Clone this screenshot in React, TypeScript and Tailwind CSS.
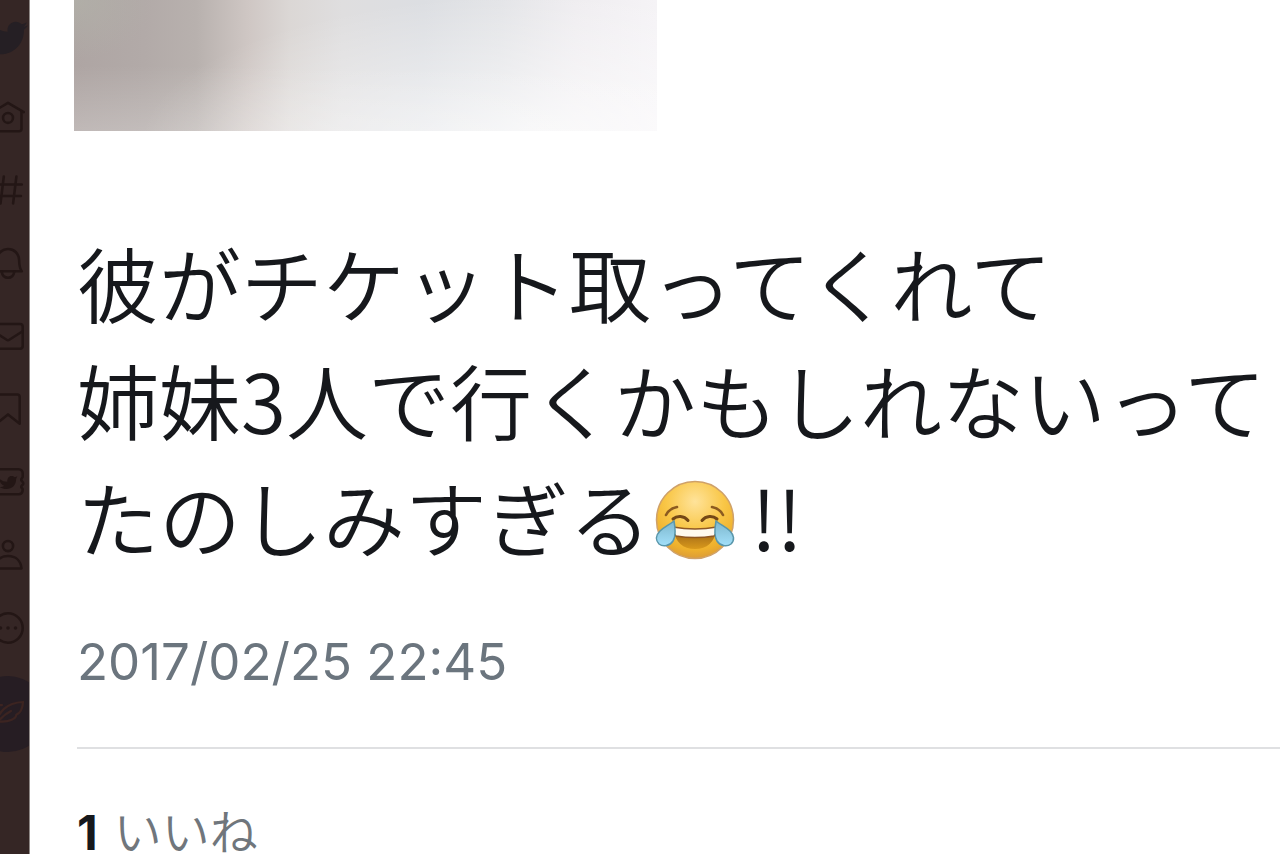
import type { ReactNode } from 'react';
import { FaTwitter } from 'react-icons/fa';

interface NavItem {
  label: string;
  icon: ReactNode;
}

// Side navigation icons, all on a 24x24 grid
const navItems: NavItem[] = [
  {
    label: 'ホーム',
    icon: (
      <>
        <path d="M1.5 8.8 12 2.6l10.5 6.2" />
        <path d="M3 8.2v11.6c0 1 .7 1.7 1.7 1.7h14.6c1 0 1.7-.7 1.7-1.7V8.2" />
        <circle cx="12" cy="12.6" r="3.3" />
      </>
    ),
  },
  {
    label: '話題を検索',
    icon: <path d="M9.2 3 7 21M17.6 3l-2.2 18M3.2 8.3h18M2.6 16h18" />,
  },
  {
    label: '通知',
    icon: (
      <>
        <path d="M2.8 17.5c1.5-1.8 1.7-3.4 1.8-7.5C4.8 5.5 8 2.7 12 2.7s7.2 2.8 7.4 7.3c.1 4.1.3 5.7 1.8 7.5z" />
        <path d="M7.8 17.8c.4 2.5 2 4 4.2 4s3.8-1.5 4.2-4" />
      </>
    ),
  },
  {
    label: 'メッセージ',
    icon: (
      <>
        <rect x="2.2" y="4" width="19.6" height="16.5" rx="1.8" />
        <path d="m2.5 9 8.6 5.5c.6.4 1.2.4 1.8 0L21.5 9" />
      </>
    ),
  },
  {
    label: 'ブックマーク',
    icon: <path d="M4.2 21.8V4c0-1 .7-1.7 1.7-1.7h12.2c1 0 1.7.7 1.7 1.7v17.8L12 15.6z" />,
  },
  {
    label: 'Twitter Blue',
    icon: (
      <>
        <path d="M5 3.5h14c1.7 0 2.8 1.2 2.8 2.8v2.2c0 .8-1 1-1 2s1.400 1.300 1.400 2.500-1.400 1.200-1.400 2.200 1 1 1 1.800c0 2-1.100 3.200-2.800 3.200H5c-1.700 0-2.800-1.200-2.800-2.800V6.300C2.200 4.700 3.300 3.500 5 3.500z" />
        <path
          d="M6 9.500c1.500 1.600 3.300 2.300 5.500 2.300 0-2.300 1-3.800 2.800-3.800 1 0 1.600.3 2.200.9l1.700-.7-.8 1.800c.1 4.200-2.700 6.700-6.400 6.700-1.800 0-3.200-.4-4.500-1.300 1.300 0 2.200-.3 3-.9-1.800-.5-3.100-2.400-3.500-5z"
          fill="currentColor"
          stroke="none"
        />
      </>
    ),
  },
  {
    label: 'プロフィール',
    icon: (
      <>
        <circle cx="12" cy="6" r="3.4" />
        <path d="M3 21c.5-5 3.8-8.3 9-8.3s8.5 3.3 9 8.3z" />
      </>
    ),
  },
  {
    label: 'もっと見る',
    icon: (
      <>
        <circle cx="12" cy="12" r="9.8" />
        <path d="M7 12h.01M12 12h.01M17 12h.01" strokeWidth="2.4" />
      </>
    ),
  },
];

const Sidebar = () => {
  return (
    <header className="w-[30px] shrink-0 overflow-hidden border-r border-[#8f8886] bg-[#352625] text-[#231615]">
      <div className="-ml-[30px] flex w-[76px] flex-col items-center">
        <a href="#home" aria-label="Twitter" className="flex h-[76px] items-center text-[#251f24]">
          <FaTwitter size={40} />
        </a>
        <nav className="mt-1 flex flex-col">
          {navItems.map((item) => (
            <a
              key={item.label}
              href="#nav"
              aria-label={item.label}
              className="flex h-[73px] items-center"
            >
              <svg
                viewBox="0 0 24 24"
                className="size-9"
                fill="none"
                stroke="currentColor"
                strokeWidth="1.7"
                strokeLinecap="round"
                strokeLinejoin="round"
              >
                {item.icon}
              </svg>
            </a>
          ))}
        </nav>
        <button
          aria-label="ツイートする"
          className="mt-3 flex size-[76px] items-center justify-center rounded-full bg-[#261d23] text-[#3c2421]"
        >
          <svg
            viewBox="0 0 24 24"
            className="size-9"
            fill="none"
            stroke="currentColor"
            strokeWidth="1.5"
            strokeLinecap="round"
            strokeLinejoin="round"
          >
            <path d="M3 21C5.5 10 11 4.5 22 4c-.3 5-2 7.5-4.5 8.5 0 2.5-4.5 5-11 4.5" />
            <path d="M3 21c2.5-5 6-8.5 11-11M2 6h6M5 3v6" />
          </svg>
        </button>
      </div>
    </header>
  );
};

const JoyEmoji = () => {
  return (
    <svg viewBox="0 0 80 80" className="size-20" role="img" aria-label="😂">
      <defs>
        <radialGradient id="face" cx="50%" cy="26%" r="74%">
          <stop offset="0%" stopColor="#ffe39a" />
          <stop offset="50%" stopColor="#f9c748" />
          <stop offset="85%" stopColor="#eeb02c" />
          <stop offset="100%" stopColor="#dc9c38" />
        </radialGradient>
        <linearGradient id="mouth" x1="0" y1="0" x2="0" y2="1">
          <stop offset="0%" stopColor="#9a6318" />
          <stop offset="100%" stopColor="#d9991b" />
        </linearGradient>
        <linearGradient id="tear" x1="0" y1="0" x2="0" y2="1">
          <stop offset="0%" stopColor="#7db6cc" />
          <stop offset="100%" stopColor="#a2e0fa" />
        </linearGradient>
      </defs>
      <circle cx="40" cy="40" r="38.5" fill="url(#face)" stroke="#cfa169" strokeWidth="1.5" />
      <path d="M19 50c1 12 9 19 21 19s20-7 21-19c-13 3-29 3-42 0z" fill="url(#mouth)" />
      <path
        d="M18 47c13 2.5 31 2.5 44 0 0 4-1 7-3 9-12 2-26 2-38 0-2-2-3-5-3-9z"
        fill="#fffaf0"
        stroke="#8e5724"
        strokeWidth="1.5"
      />
      <path
        d="M18 39c4-3.5 11-3.5 15 1.5M47 40.5c4-5 11-5 15-1.5"
        fill="none"
        stroke="#744816"
        strokeWidth="3"
        strokeLinecap="round"
      />
      <path
        d="M11 35c2-4 6-7 11-8M57 27c5 1 9 4 11 8"
        fill="none"
        stroke="#8c5b20"
        strokeWidth="2.6"
        strokeLinecap="round"
      />
      <path
        d="M19 41c1.5 8 2 15-1 20-3 5-10 6-14 3-4-4-3-9 1-13 4-4 9-6 14-10z"
        fill="url(#tear)"
        stroke="#5996aa"
        strokeWidth="1.5"
      />
      <path
        d="M61 41c-1.5 8-2 15 1 20 3 5 10 6 14 3 4-4 3-9-1-13-4-4-9-6-14-10z"
        fill="url(#tear)"
        stroke="#5996aa"
        strokeWidth="1.5"
      />
    </svg>
  );
};

export default function App() {
  return (
    <div className="flex h-screen overflow-hidden bg-white font-['Inter','Noto_Sans_CJK_JP',sans-serif] text-[#16181c]">
      <Sidebar />
      <main lang="ja" className="min-w-0 flex-1 pl-11">
        {/* Obscured account name */}
        <div className="h-[131px] w-[583px] bg-[linear-gradient(90deg,#aea5a3_0%,#b2aaa8_12%,#b8b1ae_21%,#cfc7c4_30%,#dbd7d5_37%,#dfdedf_46%,#dcdee2_60%,#e3e4e7_73%,#efedf0_86%,#f5f3f6_100%)]">
          <div className="h-full bg-[radial-gradient(80px_60px_at_0%_0%,#b2b4aa99,#b2b4aa00),linear-gradient(180deg,#ffffff00_50%,#ffffff38_100%),radial-gradient(400px_150px_at_80%_110%,#ffffffb0,#ffffff00)]" />
        </div>

        <article className="pl-[3px]">
          <p className="mt-23 font-['Noto_Sans_CJK_JP',sans-serif] text-[82px] leading-[117px] font-[350] whitespace-nowrap">
            彼がチケット取ってくれて
            <br />
            姉妹3人で行くかもしれないって
            <br />
            <span className="flex items-center">
              たのしみすぎる
              <span className="pt-2 pl-1">
                <JoyEmoji />
              </span>
              <span className="ml-4">!!</span>
            </span>
          </p>
          <time dateTime="2017-02-25T22:45" className="mt-[58px] block text-[51px] leading-[60px] text-[#6b757e]">
            2017/02/25 22:45
          </time>
          <hr className="mt-[55px] border-t-2 border-[#dfe0e2]" />
          <p className="mt-16 flex items-baseline gap-4 text-5xl leading-10 font-[350] text-[#70767c]">
            <span className="font-bold text-[#16181c]">1</span>
            いいね
          </p>
        </article>
      </main>
    </div>
  );
}
